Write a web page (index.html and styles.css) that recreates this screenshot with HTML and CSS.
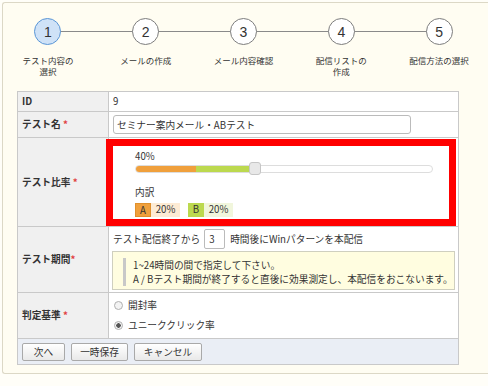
FILE: index.html
```html
<!DOCTYPE html>
<html lang="ja">
<head>
<meta charset="UTF-8">
<title>ABテスト作成</title>
<link rel="stylesheet" href="styles.css">
</head>
<body>
<div class="panel">
<ol class="steps">
<li class="step current"><span class="num">1</span><span class="label">テスト内容の<br>選択</span></li>
<li class="step"><span class="num">2</span><span class="label">メールの作成</span></li>
<li class="step"><span class="num">3</span><span class="label">メール内容確認</span></li>
<li class="step"><span class="num">4</span><span class="label">配信リストの<br>作成</span></li>
<li class="step"><span class="num">5</span><span class="label">配信方法の選択</span></li>
</ol>
<table class="form">
<tr class="row-id">
<th>ID</th>
<td>9</td>
</tr>
<tr class="row-name">
<th>テスト名 <span class="req">*</span></th>
<td><input type="text" class="text" value="セミナー案内メール・ABテスト"></td>
</tr>
<tr class="row-ratio">
<th>テスト比率 <span class="req">*</span></th>
<td class="ratio-cell">
<div class="highlight">
<div class="pct">40%</div>
<div class="slider">
<span class="fill fill-a" style="width: 60px"></span><span class="fill fill-b" style="width: 59px"></span>
<span class="handle" style="left: 113px"></span>
</div>
<div class="breakdown">内訳</div>
<div class="legend">
<span class="key key-a">A</span><span class="val val-a">20%</span>
<span class="key key-b">B</span><span class="val val-b">20%</span>
</div>
</div>
</td>
</tr>
<tr class="row-period">
<th>テスト期間<span class="req">*</span></th>
<td>
<div class="period">テスト配信終了から<input type="text" class="hours" value="3">時間後にWinパターンを本配信</div>
<div class="note"><p>1~24時間の間で指定して下さい。<br>A / Bテスト期間が終了すると直後に効果測定し、本配信をおこないます。</p></div>
</td>
</tr>
<tr class="row-judge">
<th>判定基準 <span class="req">*</span></th>
<td>
<label class="choice"><input type="radio" name="judge">開封率</label>
<label class="choice"><input type="radio" name="judge" checked>ユニーククリック率</label>
</td>
</tr>
<tr class="row-actions">
<td colspan="2">
<button class="btn btn-next">次へ</button><button class="btn btn-save">一時保存</button><button class="btn btn-cancel">キャンセル</button>
</td>
</tr>
</table>
</div>
</body>
</html>
```

FILE: styles.css
```css
body {
margin: 0;
background-color: #fffef8;
font-family: "Noto Sans CJK JP", "Noto Sans", sans-serif;
font-size: 9.7px;
color: #333;
}
.panel {
margin: 2px 0 0 2px;
height: 372px;
box-sizing: border-box;
border: 1px solid #dcd8c6;
border-right: none;
border-radius: 3px 0 0 3px;
background-color: #fffdf2;
}
.steps {
list-style: none;
display: flex;
height: 88px;
box-sizing: border-box;
margin: 0 0 0 -4px;
padding: 15px 0 0;
}
.step {
position: relative;
width: 98px;
display: flex;
flex-direction: column;
align-items: center;
}
.step + .step::before {
content: "";
position: absolute;
top: 13px;
left: -49px;
width: 98px;
height: 1px;
background-color: #8a8a8a;
}
.num {
position: relative;
z-index: 1;
width: 27px;
height: 27px;
box-sizing: border-box;
border: 1px solid #7d7d7d;
border-radius: 50%;
background-color: #fff;
display: flex;
align-items: center;
justify-content: center;
font-family: "Liberation Sans", sans-serif;
font-size: 14px;
line-height: 1;
}
.current .num {
border: 1.5px solid #5a96d6;
background-color: #cfe2f7;
}
.label {
margin-top: 10px;
font-size: 8.5px;
line-height: 11px;
text-align: center;
}
.form {
margin-left: 14px;
width: 442px;
border-collapse: collapse;
background-color: #fff;
}
.form th,
.form td {
border: 1px solid #c9c9c9;
padding: 0 0 0 4px;
line-height: 13px;
}
.form th {
width: 86px;
background-color: #f0f0f0;
text-align: left;
font-weight: bold;
}
.req {
color: #e04040;
}
.row-id th,
.row-id td {
height: 19px;
}
.row-name th,
.row-name td {
height: 25px;
}
.text {
display: block;
width: 298px;
height: 19px;
box-sizing: border-box;
margin: 0;
padding: 0 3px;
border: 1px solid #bbb;
border-radius: 3px;
font-family: inherit;
font-size: 9.7px;
color: #333;
}
.ratio-cell {
height: 88px;
}
.form .ratio-cell {
padding: 0;
}
/* red annotation frame sits over the column border */
.highlight {
position: relative;
height: 87px;
box-sizing: border-box;
margin: 0 2px 0 -3px;
padding: 5px 0 0 22px;
border: 7px solid #f00;
background-color: #fff;
}
.pct,
.breakdown {
line-height: 11px;
}
.slider {
position: relative;
display: flex;
width: 298px;
height: 8px;
box-sizing: border-box;
margin-top: 3px;
border: 1px solid #ddd;
border-radius: 4px;
background-color: #fff;
}
.fill {
height: 6px;
}
.fill-a {
background-color: #f0a03c;
border-radius: 3px 0 0 3px;
}
.fill-b {
background-color: #bcd94f;
}
.handle {
position: absolute;
top: -4px;
width: 12px;
height: 13px;
box-sizing: border-box;
border: 1px solid #c6c6c6;
border-radius: 3px;
background-color: #e8e8e8;
}
.breakdown {
margin-top: 14px;
}
.legend {
display: flex;
margin-top: 5px;
line-height: 12px;
}
.key {
width: 16px;
text-align: center;
}
.key-a {
background-color: #f0a03c;
border: 1px solid #e0902c;
box-sizing: border-box;
}
.key-b {
background-color: #bcd94f;
margin-left: 8px;
}
.val {
width: 29px;
text-align: center;
}
.val-a {
background-color: #fdebd4;
}
.val-b {
background-color: #f1f6dc;
}
.row-period td {
height: 65px;
}
.period {
display: flex;
align-items: center;
}
.hours {
width: 21px;
height: 20px;
box-sizing: border-box;
margin: 0 5px 0 4px;
padding: 0 4px;
border: 1px solid #bbb;
border-radius: 2px;
font-family: inherit;
font-size: 9.7px;
color: #333;
}
.note {
margin: 2px 3px 0 -1px;
padding: 6px 0 3px 10px;
border: 1px solid #cfcfbf;
background-color: #fffde0;
}
.note p {
margin: 0;
padding-left: 7px;
border-left: 3px solid #c8c8c8;
line-height: 14px;
}
.row-judge td {
height: 45px;
}
.choice {
display: flex;
align-items: center;
height: 20px;
}
.choice input {
appearance: none;
width: 9px;
height: 9px;
margin: 0 5px 0 1px;
border: 1px solid #b0b0b0;
border-radius: 50%;
background-color: #f3f3f3;
}
.choice input:checked {
background: radial-gradient(circle, #555 0 2px, #f3f3f3 2.5px);
}
.row-actions td {
height: 25px;
padding: 0 0 0 4px;
background-color: #eaeef5;
}
.btn {
height: 18px;
margin-right: 6px;
padding: 0;
border: 1px solid #a9a9a9;
border-radius: 2px;
background: linear-gradient(#fff, #e9e9e9);
font-family: inherit;
font-size: 9.7px;
color: #333;
}
.btn-next {
width: 43px;
}
.btn-save {
width: 57px;
}
.btn-cancel {
width: 68px;
}
```
